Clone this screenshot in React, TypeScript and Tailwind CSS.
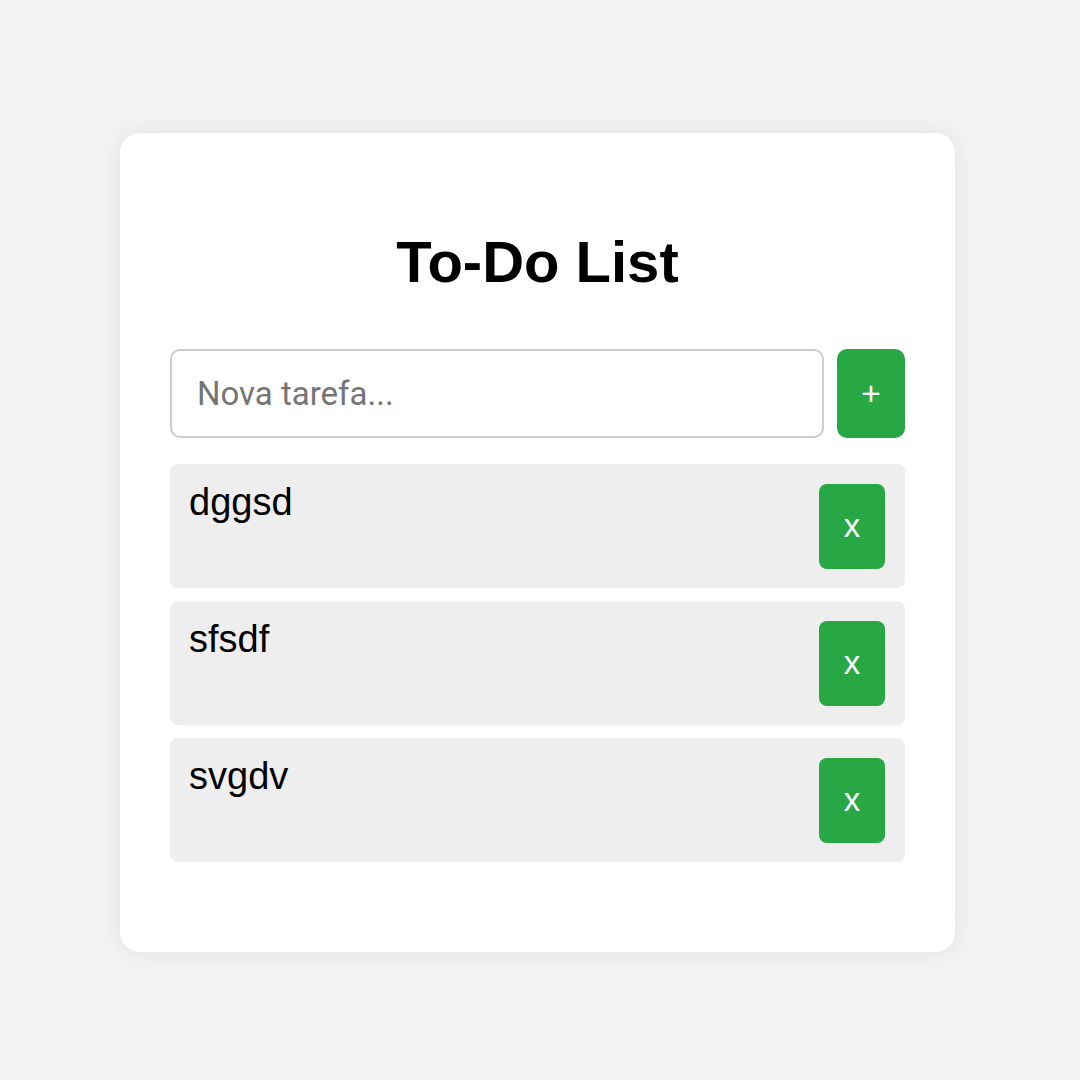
const TASKS = ["dggsd", "sfsdf", "svgdv"];

export default function App() {
  return (
    <div className="flex h-[1080px] w-full items-center justify-center bg-[#f3f3f3] pr-[5px] pt-[4px] font-['Liberation_Sans',Arial,sans-serif]">
      <div className="flex w-[835px] flex-col rounded-[20px] bg-white px-[50px] pb-[90px] pt-[96px] shadow-[0_0_24px_rgba(0,0,0,0.08)]">
        <h1 className="text-center text-[58px] font-bold leading-[66px] text-black">To-Do List</h1>
        <div className="mt-[54px] flex gap-[13px]">
          <input
            type="text"
            placeholder="Nova tarefa..."
            className="h-[89px] flex-1 rounded-[10px] border-2 border-[#cccccc] bg-white px-[25px] font-['Roboto',sans-serif] text-[33px] text-black outline-none placeholder:text-[#757575]"
          />
          <button className="h-[89px] w-[68px] rounded-[10px] bg-[#28a745] text-[34px] text-white">+</button>
        </div>
        <ul className="mt-[26px] flex flex-col gap-[13px]">
          {TASKS.map((task) => (
            <li
              key={task}
              className="flex items-start justify-between rounded-[8px] bg-[#eeeeee] pb-[13px] pl-[19px] pr-[20px] pt-[17px]"
            >
              <span className="text-[38px] leading-[42px] text-black">{task}</span>
              <button className="mb-[6px] mt-[3px] h-[85px] w-[66px] rounded-[8px] bg-[#28a745] text-[33px] text-white">
                x
              </button>
            </li>
          ))}
        </ul>
      </div>
    </div>
  );
}
